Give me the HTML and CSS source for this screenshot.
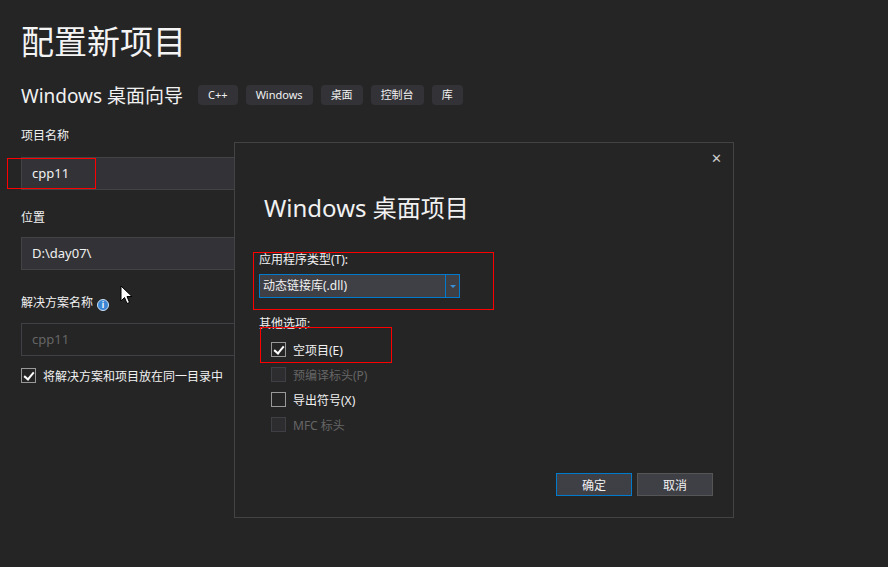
FILE: index.html
```html
<!DOCTYPE html>
<html lang="zh-CN">
<head>
    <meta charset="UTF-8">
    <title>配置新项目</title>
    <link rel="stylesheet" href="styles.css">
</head>
<body>

    <div class="page">
        <h1 class="page-title">配置新项目</h1>

        <div class="wizard-row">
            <span class="wizard-name">Windows 桌面向导</span>
            <span class="tag">C++</span>
            <span class="tag">Windows</span>
            <span class="tag">桌面</span>
            <span class="tag">控制台</span>
            <span class="tag">库</span>
        </div>

        <div class="field-label first">项目名称</div>
        <div class="text-input">cpp11</div>

        <div class="field-label">位置</div>
        <div class="text-input loc">D:\day07\</div>

        <div class="field-label sol">解决方案名称 <span class="info-icon">i</span></div>
        <div class="text-input disabled">cpp11</div>

        <label class="check-row main-check">
            <span class="check checked"></span>
            将解决方案和项目放在同一目录中
        </label>
    </div>

    <!-- mouse pointer -->
    <svg class="cursor" width="14" height="20" viewBox="0 0 14 20">
        <path d="M1 1 L1 16 L4.5 12.5 L7 18.5 L9.5 17.5 L7 11.5 L12 11.5 Z" fill="#fff" stroke="#000" stroke-width="1"/>
    </svg>

    <div class="dialog">
        <div class="dlg-top">
            <span class="dlg-close">&#x2715;</span>
        </div>
        <div class="dlg-title">Windows 桌面项目</div>

        <div class="dlg-group">
            <div class="dlg-label">应用程序类型(T):</div>
            <div class="combo">
                <span class="combo-text">动态链接库(.dll)</span>
                <span class="combo-btn"><span class="combo-arrow"></span></span>
            </div>
        </div>

        <div class="dlg-label other">其他选项:</div>
        <div class="dlg-checks">
            <label class="check-row"><span class="check checked"></span>空项目(E)</label>
            <label class="check-row off"><span class="check"></span>预编译标头(P)</label>
            <label class="check-row"><span class="check"></span>导出符号(X)</label>
            <label class="check-row off"><span class="check"></span>MFC 标头</label>
        </div>

        <div class="dlg-buttons">
            <button class="btn default">确定</button>
            <button class="btn">取消</button>
        </div>
    </div>

    <!-- red annotation boxes -->
    <div class="mark mark-name"></div>
    <div class="mark mark-type"></div>
    <div class="mark mark-empty"></div>

</body>
</html>
```

FILE: styles.css
```css
body {
    margin: 0;
    padding: 0;
    background-color: #252526;
    color: #f1f1f1;
    font-family: "Noto Sans", "Noto Sans CJK SC", sans-serif;
    width: 888px;
    height: 567px;
    overflow: hidden;
    position: relative;
}

.page {
    padding: 20px 21px 0;
}

.page-title {
    margin: 0;
    font-size: 33px;
    line-height: 40px;
    font-weight: normal;
    font-family: "Noto Sans CJK SC", sans-serif;
    color: #f4f4f4;
}

.wizard-row {
    margin-top: 24px;
    height: 22px;
    display: flex;
    align-items: center;
    gap: 8px;
}

.wizard-name {
    font-size: 19px;
    margin-right: 7px;
    color: #f1f1f1;
}

.tag {
    height: 20px;
    line-height: 20px;
    padding: 0 10px;
    font-size: 11px;
    background-color: #333337;
    border-radius: 4px;
}

.field-label {
    font-size: 12px;
    line-height: 20px;
    margin-top: 18px;
    display: flex;
    align-items: center;
    gap: 4px;
}

.field-label.first {
    margin-top: 20px;
}

.field-label.sol {
    margin-top: 23px;
}

.info-icon {
    width: 10px;
    height: 10px;
    border-radius: 50%;
    background-color: #3b86d4;
    border: 1px solid #cfe2f6;
    color: #fff;
    font-size: 8px;
    line-height: 10px;
    text-align: center;
    font-weight: bold;
    margin-top: 3px;
}

.text-input {
    box-sizing: border-box;
    margin-top: 11px;
    width: 480px;
    height: 33px;
    line-height: 31px;
    padding-left: 10px;
    font-size: 13px;
    background-color: #333337;
    border: 1px solid #434346;
}

.text-input.loc {
    margin-top: 9px;
}

.text-input.disabled {
    margin-top: 10px;
    background-color: #252526;
    border-color: #3f3f46;
    color: #656565;
}

.check-row {
    display: flex;
    align-items: center;
    gap: 7px;
    font-size: 12px;
    height: 25px;
}

.main-check {
    margin-top: 7px;
}

.check {
    box-sizing: border-box;
    width: 15px;
    height: 15px;
    border: 1px solid #999999;
    position: relative;
}

.check.checked::after {
    content: "";
    position: absolute;
    left: 4px;
    top: 1px;
    width: 4px;
    height: 8px;
    border: solid #ffffff;
    border-width: 0 2px 2px 0;
    transform: rotate(40deg);
}

.check-row.off {
    color: #656565;
}

.check-row.off .check {
    border-color: #3f3f46;
    background-color: #2d2d30;
}

.cursor {
    position: absolute;
    left: 120px;
    top: 285px;
}

.dialog {
    position: absolute;
    left: 234px;
    top: 142px;
    width: 500px;
    height: 376px;
    box-sizing: border-box;
    border: 1px solid #434346;
    background-color: #252526;
}

.dlg-top {
    display: flex;
    justify-content: flex-end;
    padding: 8px 11px 0 0;
    height: 16px;
}

.dlg-close {
    font-size: 13px;
    line-height: 16px;
    color: #cccccc;
    font-family: "DejaVu Sans", sans-serif;
    font-weight: bold;
}

.dlg-title {
    margin: 26px 0 0 29px;
    font-size: 24px;
    line-height: 30px;
}

.dlg-group {
    margin: 29px 0 0 18px;
    width: 240px;
    padding: 0 0 11px 6px;
    box-sizing: border-box;
}

.dlg-label {
    font-size: 12px;
    line-height: 16px;
}

.dlg-label.other {
    margin: 7px 0 0 24px;
}

.combo {
    margin-top: 6px;
    width: 201px;
    height: 24px;
    box-sizing: border-box;
    border: 1px solid #007acc;
    background-color: #3f3f46;
    display: flex;
    font-size: 12px;
}

.combo-text {
    flex: 1;
    line-height: 22px;
    padding-left: 3px;
}

.combo-btn {
    width: 13px;
    border-left: 1px solid #007acc;
    display: flex;
    align-items: center;
    justify-content: center;
}

.combo-arrow {
    width: 0;
    height: 0;
    border-left: 3px solid transparent;
    border-right: 3px solid transparent;
    border-top: 3px solid #3b8fd6;
}

.dlg-checks {
    margin: 5px 0 0 36px;
}

.dlg-buttons {
    display: flex;
    justify-content: flex-end;
    gap: 5px;
    margin-top: 36px;
    padding-right: 20px;
}

.btn {
    width: 76px;
    height: 23px;
    box-sizing: border-box;
    background-color: #3f3f46;
    border: 1px solid #555555;
    color: #f1f1f1;
    font-family: "Noto Sans CJK SC", sans-serif;
    font-size: 12px;
    padding: 0;
}

.btn.default {
    border-color: #007acc;
}

.mark {
    position: absolute;
    border: 1px solid #ff0000;
    box-sizing: border-box;
}

.mark-name {
    left: 7px;
    top: 158px;
    width: 89px;
    height: 31px;
}

.mark-type {
    left: 253px;
    top: 252px;
    width: 241px;
    height: 58px;
}

.mark-empty {
    left: 260px;
    top: 327px;
    width: 132px;
    height: 36px;
}
```
